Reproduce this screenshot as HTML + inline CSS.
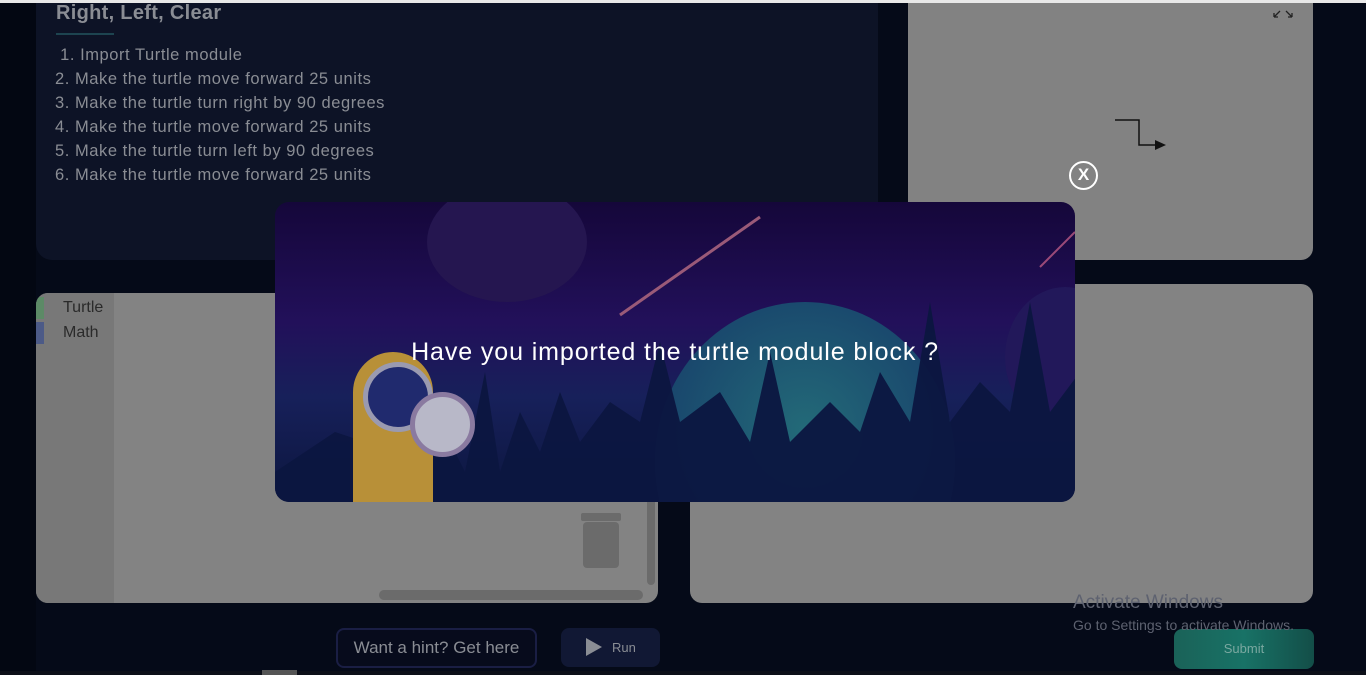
<!DOCTYPE html>
<html><head><style>
*{margin:0;padding:0;box-sizing:border-box}
body{width:1366px;height:675px;overflow:hidden;background:#050a18;position:relative;font-family:"Liberation Sans",sans-serif}
.abs{position:absolute}
</style></head><body>
<div class="abs" style="left:0;top:0;width:1366px;height:3px;background:#e8e8e8"></div>
<div class="abs" style="left:0;top:3px;width:36px;height:672px;background:#030712"></div>
<div class="abs" style="left:36px;top:3px;width:842px;height:257px;background:#0d1326;border-radius:0 0 16px 16px"></div>
<div class="abs" style="left:56px;top:2px;color:#8a8d94;font-weight:bold;font-size:20px;letter-spacing:0.3px">Right, Left, Clear</div>
<div class="abs" style="left:56px;top:33px;width:58px;height:2px;background:#1d4450"></div>
<div class="abs" style="left:55px;top:43px;color:#8a8d94;font-size:16.5px;line-height:24px;letter-spacing:0.55px">
<div>&nbsp;1. Import Turtle module</div>
<div>2. Make the turtle move forward 25 units</div>
<div>3. Make the turtle turn right by 90 degrees</div>
<div>4. Make the turtle move forward 25 units</div>
<div>5. Make the turtle turn left by 90 degrees</div>
<div>6. Make the turtle move forward 25 units</div>
</div>
<div class="abs" style="left:908px;top:3px;width:405px;height:257px;background:#828282;border-radius:0 0 12px 12px"></div>
<svg class="abs" style="left:1270px;top:3px" width="26" height="16"><path d="M4 14l6-6M4 14v-4M4 14h4M22 14l-6-6M22 14v-4M22 14h-4" stroke="#222" stroke-width="1.3" fill="none"/></svg>
<svg class="abs" style="left:1110px;top:115px" width="60" height="40"><path d="M5 5h24v25h20" stroke="#111" stroke-width="1.5" fill="none"/><path d="M45 25l11 5-11 5z" fill="#111"/></svg>
<div class="abs" style="left:36px;top:293px;width:622px;height:310px;background:#838383;border-radius:12px;overflow:hidden">
<div class="abs" style="left:0;top:0;width:78px;height:310px;background:#787878"></div>
<div class="abs" style="left:0;top:4px;width:8px;height:22px;background:#5c8a66"></div>
<div class="abs" style="left:0;top:29px;width:8px;height:22px;background:#4c5a87"></div>
<div class="abs" style="left:27px;top:6px;font-size:16px;color:#2a2a2a">Turtle</div>
<div class="abs" style="left:27px;top:31px;font-size:16px;color:#2a2a2a">Math</div>
<div class="abs" style="left:545px;top:220px;width:40px;height:8px;background:#6b6b6b;border-radius:2px"></div>
<div class="abs" style="left:547px;top:229px;width:36px;height:46px;background:#6b6b6b;border-radius:4px"></div>
<div class="abs" style="left:611px;top:200px;width:8px;height:92px;background:#6b6b6b;border-radius:4px"></div>
<div class="abs" style="left:343px;top:297px;width:264px;height:10px;background:#6b6b6b;border-radius:5px"></div>
</div>
<div class="abs" style="left:690px;top:284px;width:623px;height:319px;background:#838383;border-radius:12px"></div>
<div class="abs" style="left:275px;top:202px;width:800px;height:300px;border-radius:14px;overflow:hidden;background:linear-gradient(180deg,#15073a 0%,#22105a 40%,#17205a 65%,#0c163e 100%)">
<div class="abs" style="left:152px;top:-20px;width:160px;height:120px;border-radius:50%;background:#251650"></div>
<div class="abs" style="left:730px;top:85px;width:120px;height:140px;border-radius:50%;background:#22185a"></div>
<div class="abs" style="left:380px;top:100px;width:300px;height:320px;border-radius:50%;background:radial-gradient(circle at 50% 40%,#236a78,#173f6a 70%)"></div>
<svg class="abs" style="left:0;top:0" width="800" height="300"><path d="M345 113L485 15" stroke="#9a5a78" stroke-width="3"/><path d="M765 65L800 30" stroke="#9a4a78" stroke-width="2"/>
<path d="M0 300V270l60-40 60 20 40-40 30 60 20-100 15 100 20-60 20 40 20-60 20 50 30-40 30 20 20-80 20 80 40-30 30 50 20-90 20 90 40-40 30 30 20-60 30 50 20-120 20 120 30-40 30 30 20-110 20 110 30-40 40 30 30-70 20 60 30-20V300z" fill="#0c1640" opacity="0.95"/></svg>
<div class="abs" style="left:78px;top:150px;width:80px;height:160px;border-radius:40px 40px 10px 10px;background:#b89038"></div>
<div class="abs" style="left:88px;top:160px;width:70px;height:70px;border-radius:50%;background:#202a6e;border:5px solid #9a9ab0"></div>
<div class="abs" style="left:135px;top:190px;width:65px;height:65px;border-radius:50%;background:#b8b8c8;border:5px solid #8a7aa0"></div>
<div class="abs" style="left:0;top:136px;width:800px;text-align:center;color:#fff;font-size:25px;letter-spacing:0.9px">Have you imported the turtle module block ?</div>
</div>
<div class="abs" style="left:1069px;top:161px;width:29px;height:29px;border:2.5px solid #fff;border-radius:50%;color:#fff;font-weight:bold;font-size:17px;text-align:center;line-height:24px">X</div>
<div class="abs" style="left:336px;top:628px;width:201px;height:40px;border:2px solid #1a1e44;border-radius:8px;background:#070b1c;color:#8a8d94;font-size:17px;text-align:center;line-height:36px">Want a hint? Get here</div>
<div class="abs" style="left:561px;top:628px;width:99px;height:39px;border-radius:8px;background:#111834"></div>
<svg class="abs" style="left:585px;top:637px" width="18" height="20"><path d="M1 1l16 9-16 9z" fill="#8a8d94"/></svg>
<div class="abs" style="left:612px;top:640px;color:#8a8d94;font-size:13px">Run</div>
<div class="abs" style="left:1174px;top:629px;width:140px;height:40px;border-radius:8px;background:linear-gradient(90deg,#1a6258,#187266,#134e48);color:#7aa8a0;font-size:13px;text-align:center;line-height:40px">Submit</div>
<div class="abs" style="left:1073px;top:592px;color:#5e6270;font-size:19px">Activate Windows</div>
<div class="abs" style="left:1073px;top:617px;color:#5e6270;font-size:14px">Go to Settings to activate Windows.</div>
<div class="abs" style="left:0;top:671px;width:1366px;height:4px;background:#0c0f18"></div>
<div class="abs" style="left:262px;top:670px;width:35px;height:5px;background:#555"></div>
</body></html>
